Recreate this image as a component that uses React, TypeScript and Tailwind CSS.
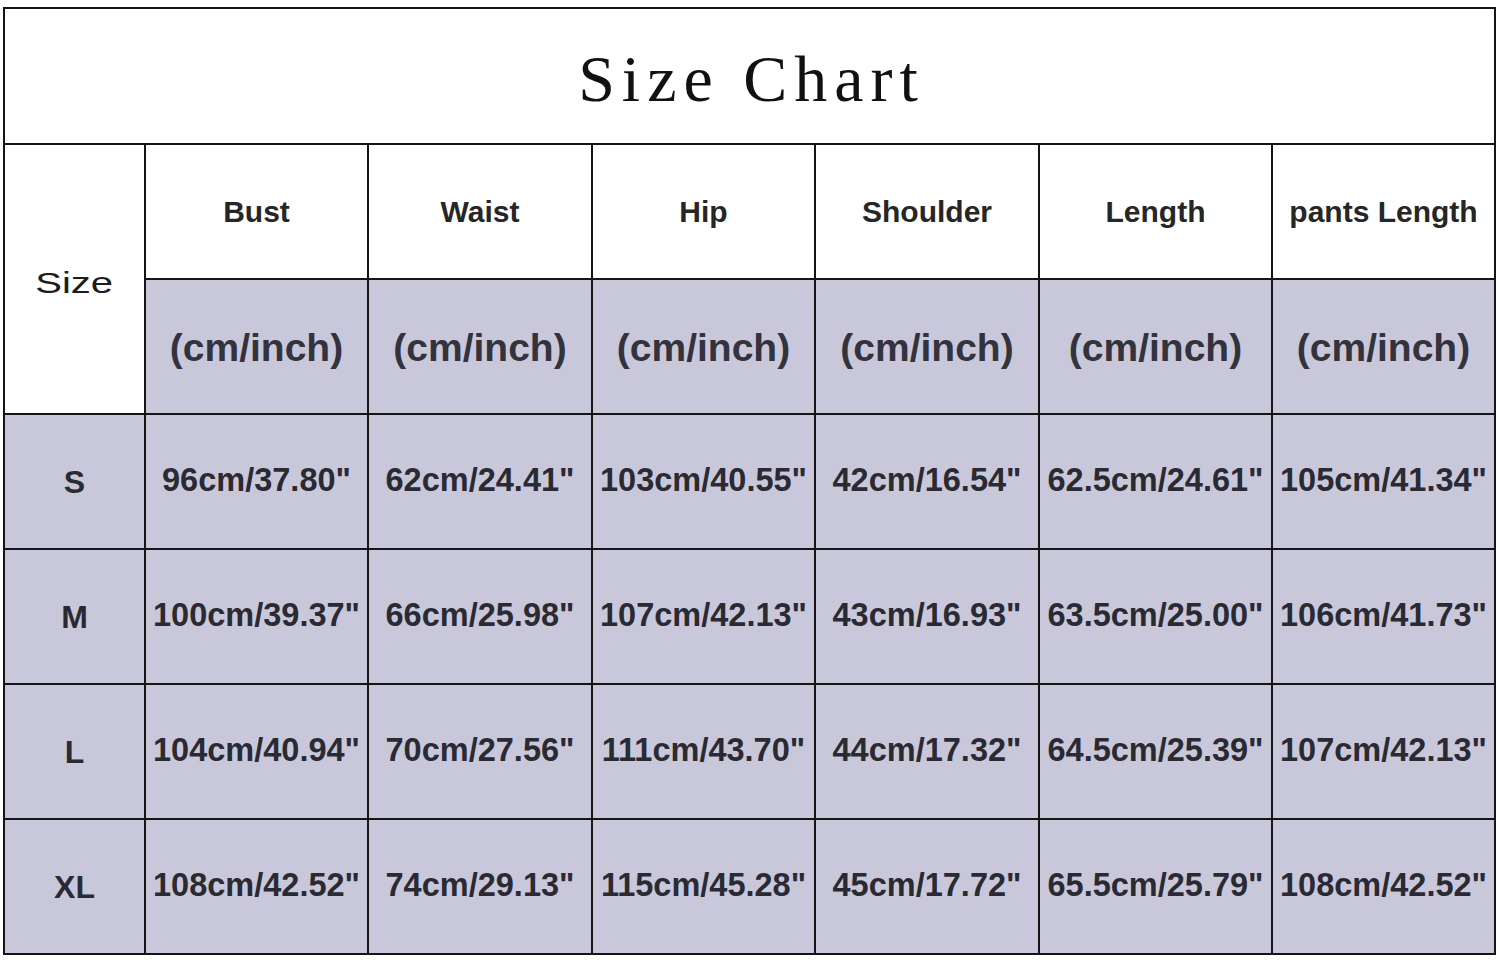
import React from 'react';

const columns = ['Bust', 'Waist', 'Hip', 'Shoulder', 'Length', 'pants Length'];
const colWidths = ['w-[141px]', 'w-[223px]', 'w-[224px]', 'w-[223px]', 'w-[224px]', 'w-[233px]', 'w-[223px]'];

const rows = [
  { size: 'S', values: ['96cm/37.80"', '62cm/24.41"', '103cm/40.55"', '42cm/16.54"', '62.5cm/24.61"', '105cm/41.34"'] },
  { size: 'M', values: ['100cm/39.37"', '66cm/25.98"', '107cm/42.13"', '43cm/16.93"', '63.5cm/25.00"', '106cm/41.73"'] },
  { size: 'L', values: ['104cm/40.94"', '70cm/27.56"', '111cm/43.70"', '44cm/17.32"', '64.5cm/25.39"', '107cm/42.13"'] },
  { size: 'XL', values: ['108cm/42.52"', '74cm/29.13"', '115cm/45.28"', '45cm/17.72"', '65.5cm/25.79"', '108cm/42.52"'] },
];

const cell = 'border-2 border-[#151515] text-center align-middle p-0';

const App: React.FC = () => {
  return (
    <div className="w-[1500px] h-[964px] bg-white pl-[3px] pt-[7px]">
      <table className="table-fixed border-collapse w-[1493px] font-['Liberation_Sans',Arial,sans-serif]">
        <colgroup>
          {colWidths.map((w, i) => (
            <col key={i} className={w} />
          ))}
        </colgroup>
        <tbody>
          {/* Title */}
          <tr className="h-[136px]">
            <td colSpan={7} className={`${cell} bg-white`}>
              <span className="inline-block pt-[4px] pl-[4px] font-['Liberation_Serif',serif] text-[66px] tracking-[7px] text-[#111]">
                Size Chart
              </span>
            </td>
          </tr>

          {/* Column names */}
          <tr className="h-[135px]">
            <td rowSpan={2} className={`${cell} bg-white`}>
              <span className="inline-block pt-[10px] text-[29px] text-[#1c1c1c] scale-x-[1.38]">Size</span>
            </td>
            {columns.map((c) => (
              <td key={c} className={`${cell} bg-white text-[30px] font-bold text-[#262626]`}>
                {c}
              </td>
            ))}
          </tr>
          <tr className="h-[135px]">
            {columns.map((c) => (
              <td key={c} className={`${cell} bg-[#c9c8da] text-[39px] font-bold text-[#33333d]`}>
                <span className="inline-block pt-[4px]">(cm/inch)</span>
              </td>
            ))}
          </tr>

          {/* Sizes */}
          {rows.map((r) => (
            <tr key={r.size} className="h-[135px]">
              <td className={`${cell} bg-[#c9c8da] text-[32px] font-bold text-[#2a2a33]`}>{r.size}</td>
              {r.values.map((v, i) => (
                <td key={i} className={`${cell} bg-[#c9c8da] text-[32.5px] font-bold text-[#2a2a33] whitespace-nowrap`}>
                  <span className="inline-block pb-[3px]">{v}</span>
                </td>
              ))}
            </tr>
          ))}
        </tbody>
      </table>
    </div>
  );
};

export default App;
